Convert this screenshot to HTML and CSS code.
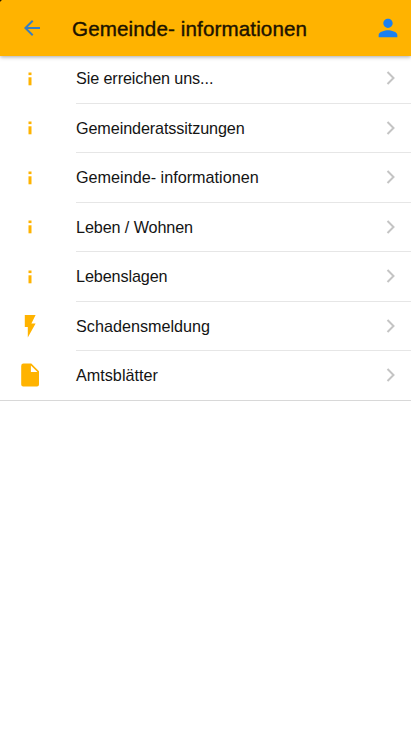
FILE: index.html
```html
<!DOCTYPE html>
<html lang="de">
<head>
<meta charset="utf-8">
<meta name="viewport" content="width=device-width, initial-scale=1">
<title>Gemeinde- informationen</title>
<link rel="stylesheet" href="styles.css">
</head>
<body>
<svg class="symbols" aria-hidden="true">
  <symbol id="info" viewBox="0 0 24 24"><rect x="10.500" y="5.500" width="3" height="2.600"/><rect x="10.500" y="10.300" width="3" height="8"/></symbol>
  <symbol id="chevron" viewBox="0 0 12 16"><path d="M2.500 2 8.500 8l-6 6"/></symbol>
</svg>
<header class="bar">
  <svg class="back" viewBox="0 0 24 24"><path d="M20 11H7.83l5.59-5.59L12 4l-8 8 8 8 1.41-1.41L7.83 13H20z"/></svg>
  <h1 class="title">Gemeinde- informationen</h1>
  <svg class="person" viewBox="0 0 24 24"><path d="M12 12c2.21 0 4-1.79 4-4s-1.79-4-4-4-4 1.79-4 4 1.79 4 4 4zm0 2c-2.67 0-8 1.34-8 4v2h16v-2c0-2.66-5.33-4-8-4z"/></svg>
</header>
<ul class="list">
  <li class="row"><svg class="icon"><use href="#info"/></svg><div class="cell"><span class="tight">Sie erreichen uns...</span><svg class="chevron"><use href="#chevron"/></svg></div></li>
  <li class="row"><svg class="icon"><use href="#info"/></svg><div class="cell"><span class="tight">Gemeinderatssitzungen</span><svg class="chevron"><use href="#chevron"/></svg></div></li>
  <li class="row"><svg class="icon"><use href="#info"/></svg><div class="cell"><span>Gemeinde- informationen</span><svg class="chevron"><use href="#chevron"/></svg></div></li>
  <li class="row"><svg class="icon"><use href="#info"/></svg><div class="cell"><span class="tight">Leben / Wohnen</span><svg class="chevron"><use href="#chevron"/></svg></div></li>
  <li class="row"><svg class="icon"><use href="#info"/></svg><div class="cell"><span class="tight">Lebenslagen</span><svg class="chevron"><use href="#chevron"/></svg></div></li>
  <li class="row"><svg class="icon" viewBox="0 0 24 24"><path d="M6.800 1v12h3v10.500L17.600 9.500h-4.200L17.600 1z"/></svg><div class="cell"><span>Schadensmeldung</span><svg class="chevron"><use href="#chevron"/></svg></div></li>
  <li class="row"><svg class="icon" viewBox="0 0 24 24"><path d="M5.500.6h7.800L21 8.300v13.200a2 2 0 0 1-2 2H5.200a2 2 0 0 1-2-2V2.900A2.300 2.300 0 0 1 5.500.6zm7.400 1.900V9h6.500z"/></svg><div class="cell"><span>Amtsblätter</span><svg class="chevron"><use href="#chevron"/></svg></div></li>
</ul>
</body>
</html>
```
FILE: styles.css
```css
* { box-sizing: border-box; }
body {
  margin: 0;
  background: #fff;
  color: #141414;
  font-family: "Liberation Sans", Arial, sans-serif;
}
.symbols { display: none; }
.bar {
  position: relative;
  display: flex;
  align-items: center;
  height: 56px;
  padding: 0 9px 0 20px;
  background: radial-gradient(circle at 0 0, #2a1d00 1px, transparent 2px), #ffb300;
  box-shadow: 0 1px 4px rgba(0, 0, 0, .35);
}
.back { width: 24px; height: 24px; fill: #387ec0; }
.title {
  flex: 1;
  margin: 1px 0 0 28px;
  font-size: 20.6px;
  font-weight: 400;
  line-height: 24px;
  letter-spacing: .12px;
  white-space: nowrap;
  color: #1c1300;
  -webkit-text-stroke: .4px #1c1300;
}
.person { width: 28px; height: 28px; fill: #1a80f0; }
.list {
  margin: -2px 0 0;
  padding: 0;
  list-style: none;
  border-bottom: 1px solid #d8d8d8;
}
.row { display: flex; align-items: center; height: 49.5px; }
.icon { flex: none; width: 24px; height: 24px; margin: 0 34px 0 18px; fill: #ffb300; }
.cell {
  flex: 1;
  display: flex;
  align-items: center;
  justify-content: space-between;
  height: 100%;
  padding: 1px 14px 0 0;
  border-bottom: 1px solid #e6e6e6;
  font-size: 16.2px;
}
.tight { letter-spacing: -.11px; }
.row:last-child { height: 49px; padding-bottom: 1px; }
.row:last-child .cell { border-bottom: 0; }
.chevron {
  width: 12px;
  height: 16px;
  margin-top: -1px;
  fill: none;
  stroke: #c4c4c4;
  stroke-width: 2;
}
```
